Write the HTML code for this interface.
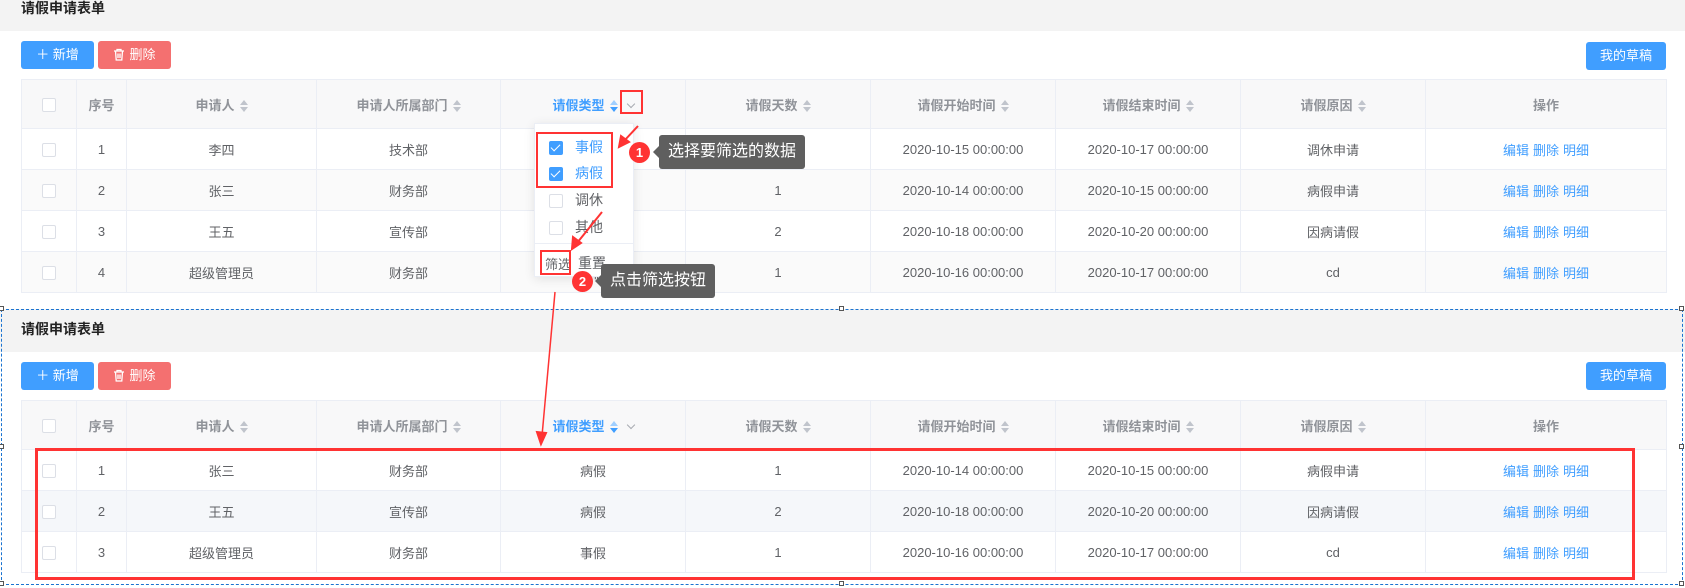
<!DOCTYPE html>
<html><head><meta charset="utf-8"><style>
*{box-sizing:border-box;margin:0;padding:0}
body{width:1685px;height:588px;background:#fff;font-family:"Liberation Sans","Noto Sans CJK SC",sans-serif;position:relative;overflow:hidden;color:#606266}
.abs{position:absolute}
.bar{left:0;width:1685px;background:#f3f3f3}
.title{font-size:14px;font-weight:bold;color:#222}
.btn{position:absolute;height:28px;border-radius:3px;color:#fff;font-size:13px;line-height:28px;text-align:center}
.btn svg{vertical-align:-2px;margin-right:4px}
.blue{background:#409eff}.red{background:#f47070}
table{position:absolute;left:21px;width:1645px;border-collapse:collapse;table-layout:fixed;font-size:13px}
td,th{border:1px solid #ebeef5;text-align:center;overflow:hidden;white-space:nowrap}
th{height:49px;background:#f8f8f9;color:#909399;font-weight:bold}
td{height:41px}
tr.s td{background:#fafafa}
tr.h td{background:#f5f7fa}
.cb{display:inline-block;width:14px;height:14px;border:1px solid #dcdfe6;border-radius:2px;background:#fff;vertical-align:middle}
.car{display:inline-block;width:8px;height:14px;vertical-align:middle;margin-left:5px;position:relative}
.car:before,.car:after{content:"";position:absolute;left:0;border-left:4px solid transparent;border-right:4px solid transparent}
.car:before{top:1px;border-bottom:5px solid #c0c4cc}
.car:after{bottom:1px;border-top:5px solid #c0c4cc}
.car.a:before{border-bottom-color:#a0cfff}.car.a:after{border-top-color:#409eff}
.act{color:#409eff}
.dd{display:inline-block;width:6px;height:6px;border:solid #a8abb2;border-width:0 1px 1px 0;transform:rotate(45deg);margin-left:10px;vertical-align:3px}
.lk{color:#409eff;margin:0 2px}
.rb{position:absolute;border:2px solid #f33}
.circ{position:absolute;width:21px;height:21px;border-radius:50%;background:#f33;color:#fff;font-size:13px;font-weight:bold;text-align:center;line-height:21px}
.tip{position:absolute;background:#5f5f5f;color:#fff;font-size:16px;border-radius:3px;padding:0 9px}
.tip:before{content:"";position:absolute;left:-6px;top:50%;margin-top:-6px;border-top:6px solid transparent;border-bottom:6px solid transparent;border-right:6px solid #5f5f5f}
.chk{display:inline-block;width:14px;height:14px;border-radius:2px;background:#409eff;position:relative;vertical-align:middle}
.chk:after{content:"";position:absolute;left:4px;top:1px;width:4px;height:8px;border:solid #fff;border-width:0 1px 1px 0;transform:rotate(45deg)}
.hd{position:absolute;width:5px;height:5px;border:1px solid #555;background:#fff}
</style></head><body>

<div class="abs bar" style="top:0;height:31px"></div>
<div class="abs title" style="left:21px;top:0px;line-height:16px">请假申请表单</div>
<div class="btn blue" style="left:21px;top:41px;width:73px">＋ 新增</div>
<div class="btn red" style="left:98px;top:41px;width:73px"><svg width="12" height="13" viewBox="0 0 12 13" fill="none" stroke="#fff" stroke-width="1.3"><path d="M1 3h10M4 3V1.5h4V3M2.5 3l.7 9h5.6l.7-9M5 5.5v4.5M7 5.5v4.5"/></svg>删除</div>
<div class="btn blue" style="left:1586px;top:42px;width:80px">我的草稿</div>

<table style="top:79px">
<colgroup><col style="width:55px"><col style="width:50px"><col style="width:190px"><col style="width:184px"><col style="width:185px"><col style="width:185px"><col style="width:185px"><col style="width:185px"><col style="width:185px"><col style="width:241px"></colgroup>
<tr><th><span class="cb"></span></th><th>序号</th><th>申请人<span class="car"></span></th><th>申请人所属部门<span class="car"></span></th><th class="act">请假类型<span class="car a"></span><span class="dd"></span></th><th>请假天数<span class="car"></span></th><th>请假开始时间<span class="car"></span></th><th>请假结束时间<span class="car"></span></th><th>请假原因<span class="car"></span></th><th>操作</th></tr>
<tr><td><span class="cb"></span></td><td>1</td><td>李四</td><td>技术部</td><td>事假</td><td>2</td><td>2020-10-15 00:00:00</td><td>2020-10-17 00:00:00</td><td>调休申请</td><td><span class="lk">编辑</span><span class="lk">删除</span><span class="lk">明细</span></td></tr>
<tr class="s"><td><span class="cb"></span></td><td>2</td><td>张三</td><td>财务部</td><td>病假</td><td>1</td><td>2020-10-14 00:00:00</td><td>2020-10-15 00:00:00</td><td>病假申请</td><td><span class="lk">编辑</span><span class="lk">删除</span><span class="lk">明细</span></td></tr>
<tr><td><span class="cb"></span></td><td>3</td><td>王五</td><td>宣传部</td><td>病假</td><td>2</td><td>2020-10-18 00:00:00</td><td>2020-10-20 00:00:00</td><td>因病请假</td><td><span class="lk">编辑</span><span class="lk">删除</span><span class="lk">明细</span></td></tr>
<tr class="s"><td><span class="cb"></span></td><td>4</td><td>超级管理员</td><td>财务部</td><td>事假</td><td>1</td><td>2020-10-16 00:00:00</td><td>2020-10-17 00:00:00</td><td>cd</td><td><span class="lk">编辑</span><span class="lk">删除</span><span class="lk">明细</span></td></tr>
</table>

<!-- second section -->
<div class="abs bar" style="top:309px;height:43px"></div>
<div class="abs title" style="left:21px;top:320px;line-height:18px">请假申请表单</div>
<div class="btn blue" style="left:21px;top:362px;width:73px">＋ 新增</div>
<div class="btn red" style="left:98px;top:362px;width:73px"><svg width="12" height="13" viewBox="0 0 12 13" fill="none" stroke="#fff" stroke-width="1.3"><path d="M1 3h10M4 3V1.5h4V3M2.5 3l.7 9h5.6l.7-9M5 5.5v4.5M7 5.5v4.5"/></svg>删除</div>
<div class="btn blue" style="left:1586px;top:362px;width:80px">我的草稿</div>

<table style="top:400px">
<colgroup><col style="width:55px"><col style="width:50px"><col style="width:190px"><col style="width:184px"><col style="width:185px"><col style="width:185px"><col style="width:185px"><col style="width:185px"><col style="width:185px"><col style="width:241px"></colgroup>
<tr><th><span class="cb"></span></th><th>序号</th><th>申请人<span class="car"></span></th><th>申请人所属部门<span class="car"></span></th><th class="act">请假类型<span class="car a"></span><span class="dd"></span></th><th>请假天数<span class="car"></span></th><th>请假开始时间<span class="car"></span></th><th>请假结束时间<span class="car"></span></th><th>请假原因<span class="car"></span></th><th>操作</th></tr>
<tr><td><span class="cb"></span></td><td>1</td><td>张三</td><td>财务部</td><td>病假</td><td>1</td><td>2020-10-14 00:00:00</td><td>2020-10-15 00:00:00</td><td>病假申请</td><td><span class="lk">编辑</span><span class="lk">删除</span><span class="lk">明细</span></td></tr>
<tr class="h"><td><span class="cb"></span></td><td>2</td><td>王五</td><td>宣传部</td><td>病假</td><td>2</td><td>2020-10-18 00:00:00</td><td>2020-10-20 00:00:00</td><td>因病请假</td><td><span class="lk">编辑</span><span class="lk">删除</span><span class="lk">明细</span></td></tr>
<tr><td><span class="cb"></span></td><td>3</td><td>超级管理员</td><td>财务部</td><td>事假</td><td>1</td><td>2020-10-16 00:00:00</td><td>2020-10-17 00:00:00</td><td>cd</td><td><span class="lk">编辑</span><span class="lk">删除</span><span class="lk">明细</span></td></tr>
</table>

<!-- dashed selection border -->
<div class="abs" style="left:1px;top:309px;width:1682px;height:276px;border:1px dashed #1a73d0"></div>
<div class="hd" style="left:-1px;top:306px"></div><div class="hd" style="left:839px;top:306px"></div><div class="hd" style="left:1679px;top:306px"></div>
<div class="hd" style="left:-1px;top:444px"></div><div class="hd" style="left:1679px;top:444px"></div>
<div class="hd" style="left:-1px;top:581px"></div><div class="hd" style="left:839px;top:581px"></div><div class="hd" style="left:1679px;top:581px"></div>

<div class="rb" style="left:35px;top:448px;width:1600px;height:132px;border-width:3px"></div>

<!-- dropdown -->
<div class="abs" style="left:534px;top:123px;width:100px;height:154px;background:#fff;border:1px solid #ebeef5;box-shadow:0 2px 10px rgba(0,0,0,.1);font-size:14px">
  <div class="abs" style="left:14px;top:13px"><span class="chk"></span><span style="color:#409eff;margin-left:12px">事假</span></div>
  <div class="abs" style="left:14px;top:39px"><span class="chk"></span><span style="color:#409eff;margin-left:12px">病假</span></div>
  <div class="abs" style="left:14px;top:66px"><span class="cb"></span><span style="margin-left:12px">调休</span></div>
  <div class="abs" style="left:14px;top:93px"><span class="cb"></span><span style="margin-left:12px">其他</span></div>
  <div class="abs" style="left:0;top:119px;width:98px;border-top:1px solid #ebeef5"></div>
  <div class="abs" style="left:10px;top:130px;font-size:13px">筛选</div>
  <div class="abs" style="left:43px;top:129px">重置</div>
</div>
<div class="rb" style="left:536px;top:132px;width:77px;height:56px"></div>
<div class="rb" style="left:540px;top:250px;width:31px;height:25px"></div>
<div class="rb" style="left:620px;top:90px;width:23px;height:24px"></div>

<svg class="abs" style="left:0;top:0" width="1685" height="588">
<g stroke="#f33" stroke-width="2" fill="#f33">
<line x1="638" y1="126" x2="624" y2="141"/><polygon points="619,147 621,136 629,142"/>
<line x1="602" y1="212" x2="577" y2="243"/><polygon points="572,249 573,237 581,243"/>
<line x1="555" y1="292" x2="542" y2="436" stroke-width="1.5"/><polygon points="541,444 537,432 546,433"/>
</g></svg>

<div class="circ" style="left:629px;top:142px">1</div>
<div class="tip" style="left:659px;top:135px;height:34px;line-height:34px">选择要筛选的数据</div>
<div class="circ" style="left:572px;top:271px">2</div>
<div class="tip" style="left:601px;top:264px;height:34px;line-height:34px">点击筛选按钮</div>
</body></html>
